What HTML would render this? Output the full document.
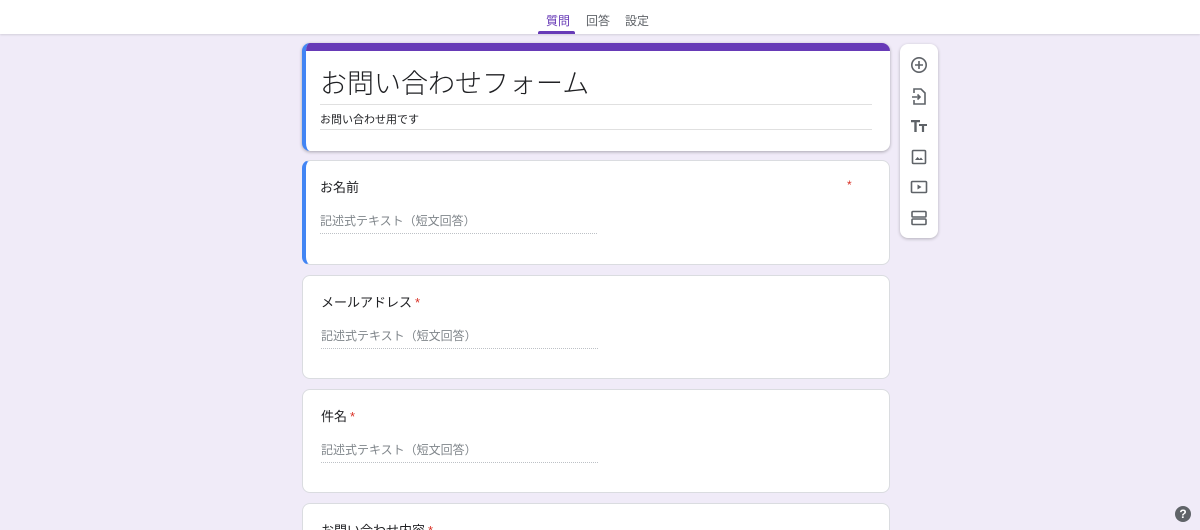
<!DOCTYPE html>
<html><head><meta charset="utf-8"><style>
*{margin:0;padding:0;box-sizing:border-box}
html,body{width:1200px;height:530px;overflow:hidden}
body{background:#f0ebf8;font-family:"Liberation Sans","Noto Sans CJK JP",sans-serif;color:#202124;position:relative}
.hdr{position:absolute;left:0;top:0;width:1200px;height:34px;background:#fff;box-shadow:0 1px 2px rgba(0,0,0,.12)}
.tab{position:absolute;top:12px;font-size:12px;color:#5f6368}
.card{position:absolute;left:302px;width:588px;background:#fff;border-radius:8px;border:1px solid #dadce0}
.blue{border-left:4px solid #4285f4}
.q{position:absolute;left:18px;top:16px;font-size:13px}
.blue .q,.blue .ph{left:14px}
.q b{color:#d93025;font-weight:normal;margin-left:3px}
.ph{position:absolute;left:18px;top:51px;font-size:12px;color:#80868b;width:277px;height:22px;border-bottom:1px dotted #bdc1c6}
.tb{position:absolute;left:900px;top:44px;width:38px;height:194px;background:#fff;border-radius:8px;box-shadow:0 1px 3px rgba(0,0,0,.25)}
.tb svg{position:absolute;left:10px}
</style></head><body>
<div class="hdr">
<span class="tab" style="left:546px;color:#673ab7">質問</span>
<span class="tab" style="left:586px">回答</span>
<span class="tab" style="left:625px">設定</span>
<div style="position:absolute;left:538px;top:31px;width:37px;height:3px;background:#673ab7;border-radius:2px 2px 0 0"></div>
</div>
<div class="card" style="top:43px;height:108px;border:none;border-left:4px solid #4285f4;box-shadow:0 1px 3px rgba(0,0,0,.3);overflow:hidden">
<div style="position:absolute;left:-4px;top:0;width:592px;height:8px;background:#673ab7"></div>
<div style="position:absolute;left:14px;top:19px;font-size:27px;font-weight:300">お問い合わせフォーム</div>
<div style="position:absolute;left:14px;top:61px;width:552px;border-top:1px solid #e0e0e0"></div>
<div style="position:absolute;left:14px;top:68px;font-size:11px">お問い合わせ用です</div>
<div style="position:absolute;left:14px;top:86px;width:552px;border-top:1px solid #e0e0e0"></div>
</div>
<div class="card blue" style="top:160px;height:105px"><div class="q">お名前</div><div style="position:absolute;left:541px;top:17px;color:#d93025;font-size:12px">*</div><div class="ph">記述式テキスト（短文回答）</div></div>
<div class="card" style="top:275px;height:104px"><div class="q">メールアドレス<b>*</b></div><div class="ph">記述式テキスト（短文回答）</div></div>
<div class="card" style="top:389px;height:104px"><div class="q">件名<b>*</b></div><div class="ph">記述式テキスト（短文回答）</div></div>
<div class="card" style="top:503px;height:27px;border-bottom:none;border-radius:8px 8px 0 0;overflow:hidden"><div class="q">お問い合わせ内容<b>*</b></div></div>
<div class="tb">
<svg style="top:12px" width="18" height="18" viewBox="0 0 18 18" fill="none" stroke="#5f6368" stroke-width="1.6"><circle cx="9" cy="9" r="7.2"/><path d="M9 5v8M5 9h8"/></svg>
<svg style="top:43px" width="18" height="18" viewBox="0 0 18 18" fill="none" stroke="#5f6368" stroke-width="1.6"><path d="M4 6V2h7l4 4v11H4v-4"/><path d="M2 10h8M7.5 7.5 10 10l-2.5 2.5"/></svg>
<svg style="top:73px" width="18" height="18" viewBox="0 0 18 18" fill="#5f6368"><path d="M1 3h9v2.2H6.7V15H4.3V5.2H1zM9 7h8v2h-2.9v6h-2.2V9H9z"/></svg>
<svg style="top:104px" width="18" height="18" viewBox="0 0 18 18" fill="none" stroke="#5f6368" stroke-width="1.6"><rect x="2.5" y="2.5" width="13" height="13" rx="1"/><path d="M5 12l2.5-3 2 2 1.5-1.5L13 12z" fill="#5f6368" stroke="none"/></svg>
<svg style="top:134px" width="18" height="18" viewBox="0 0 18 18" fill="none" stroke="#5f6368" stroke-width="1.6"><rect x="1.5" y="3.5" width="15" height="11" rx="1"/><path d="M7.5 6.5v5l4-2.5z" fill="#5f6368" stroke="none"/></svg>
<svg style="top:165px" width="18" height="18" viewBox="0 0 18 18" fill="none" stroke="#5f6368" stroke-width="1.6"><rect x="2" y="2.5" width="14" height="5.5" rx="1"/><rect x="2" y="10" width="14" height="5.5" rx="1"/></svg>
</div>
<div style="position:absolute;left:1175px;top:506px;width:16px;height:16px;border-radius:50%;background:#5f6368;color:#fff;font-size:12px;font-weight:bold;text-align:center;line-height:16px">?</div>
</body></html>
